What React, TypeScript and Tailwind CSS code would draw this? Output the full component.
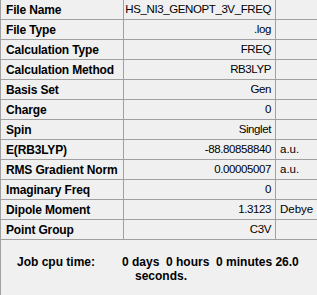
const ROWS: { label: string; value: string; unit?: string }[] = [
  { label: "File Name", value: "HS_NI3_GENOPT_3V_FREQ" },
  { label: "File Type", value: ".log" },
  { label: "Calculation Type", value: "FREQ" },
  { label: "Calculation Method", value: "RB3LYP" },
  { label: "Basis Set", value: "Gen" },
  { label: "Charge", value: "0" },
  { label: "Spin", value: "Singlet" },
  { label: "E(RB3LYP)", value: "-88.80858840", unit: "a.u." },
  { label: "RMS Gradient Norm", value: "0.00005007", unit: "a.u." },
  { label: "Imaginary Freq", value: "0" },
  { label: "Dipole Moment", value: "1.3123", unit: "Debye" },
  { label: "Point Group", value: "C3V" },
];

export default function App() {
  return (
    <div
      className="w-[317px] h-[295px] overflow-hidden bg-[#f0f0f0] text-black border-l border-[#a0a0a0] text-[12px] leading-none"
      style={{ fontFamily: '"Liberation Sans", Arial, sans-serif' }}
    >
      {/* summary grid */}
      <div className="flex flex-col">
        {ROWS.map((r) => (
          <div key={r.label} className="flex h-[20px] border-b border-[#a0a0a0]">
            <div className="w-[123px] shrink-0 border-r border-[#a0a0a0] pl-[5px] flex items-center font-bold whitespace-nowrap tracking-[-0.15px]">
              {r.label}
            </div>
            <div className="w-[152px] shrink-0 border-r border-[#a0a0a0] pr-[4px] flex items-center justify-end whitespace-nowrap text-[11.5px] tracking-[-0.4px]">
              {r.value}
            </div>
            <div className="flex-1 pl-[4px] flex items-center whitespace-nowrap text-[11.5px]">
              {r.unit}
            </div>
          </div>
        ))}
      </div>

      {/* job timing */}
      <div className="flex pt-[16px] font-bold">
        <div className="w-[121px] shrink-0 pl-[16px]">Job cpu time:</div>
        <div className="flex flex-col gap-[2px]">
          <div className="whitespace-pre">0 days  0 hours  0 minutes 26.0</div>
          <div className="pl-[13px]">seconds.</div>
        </div>
      </div>
    </div>
  );
}
